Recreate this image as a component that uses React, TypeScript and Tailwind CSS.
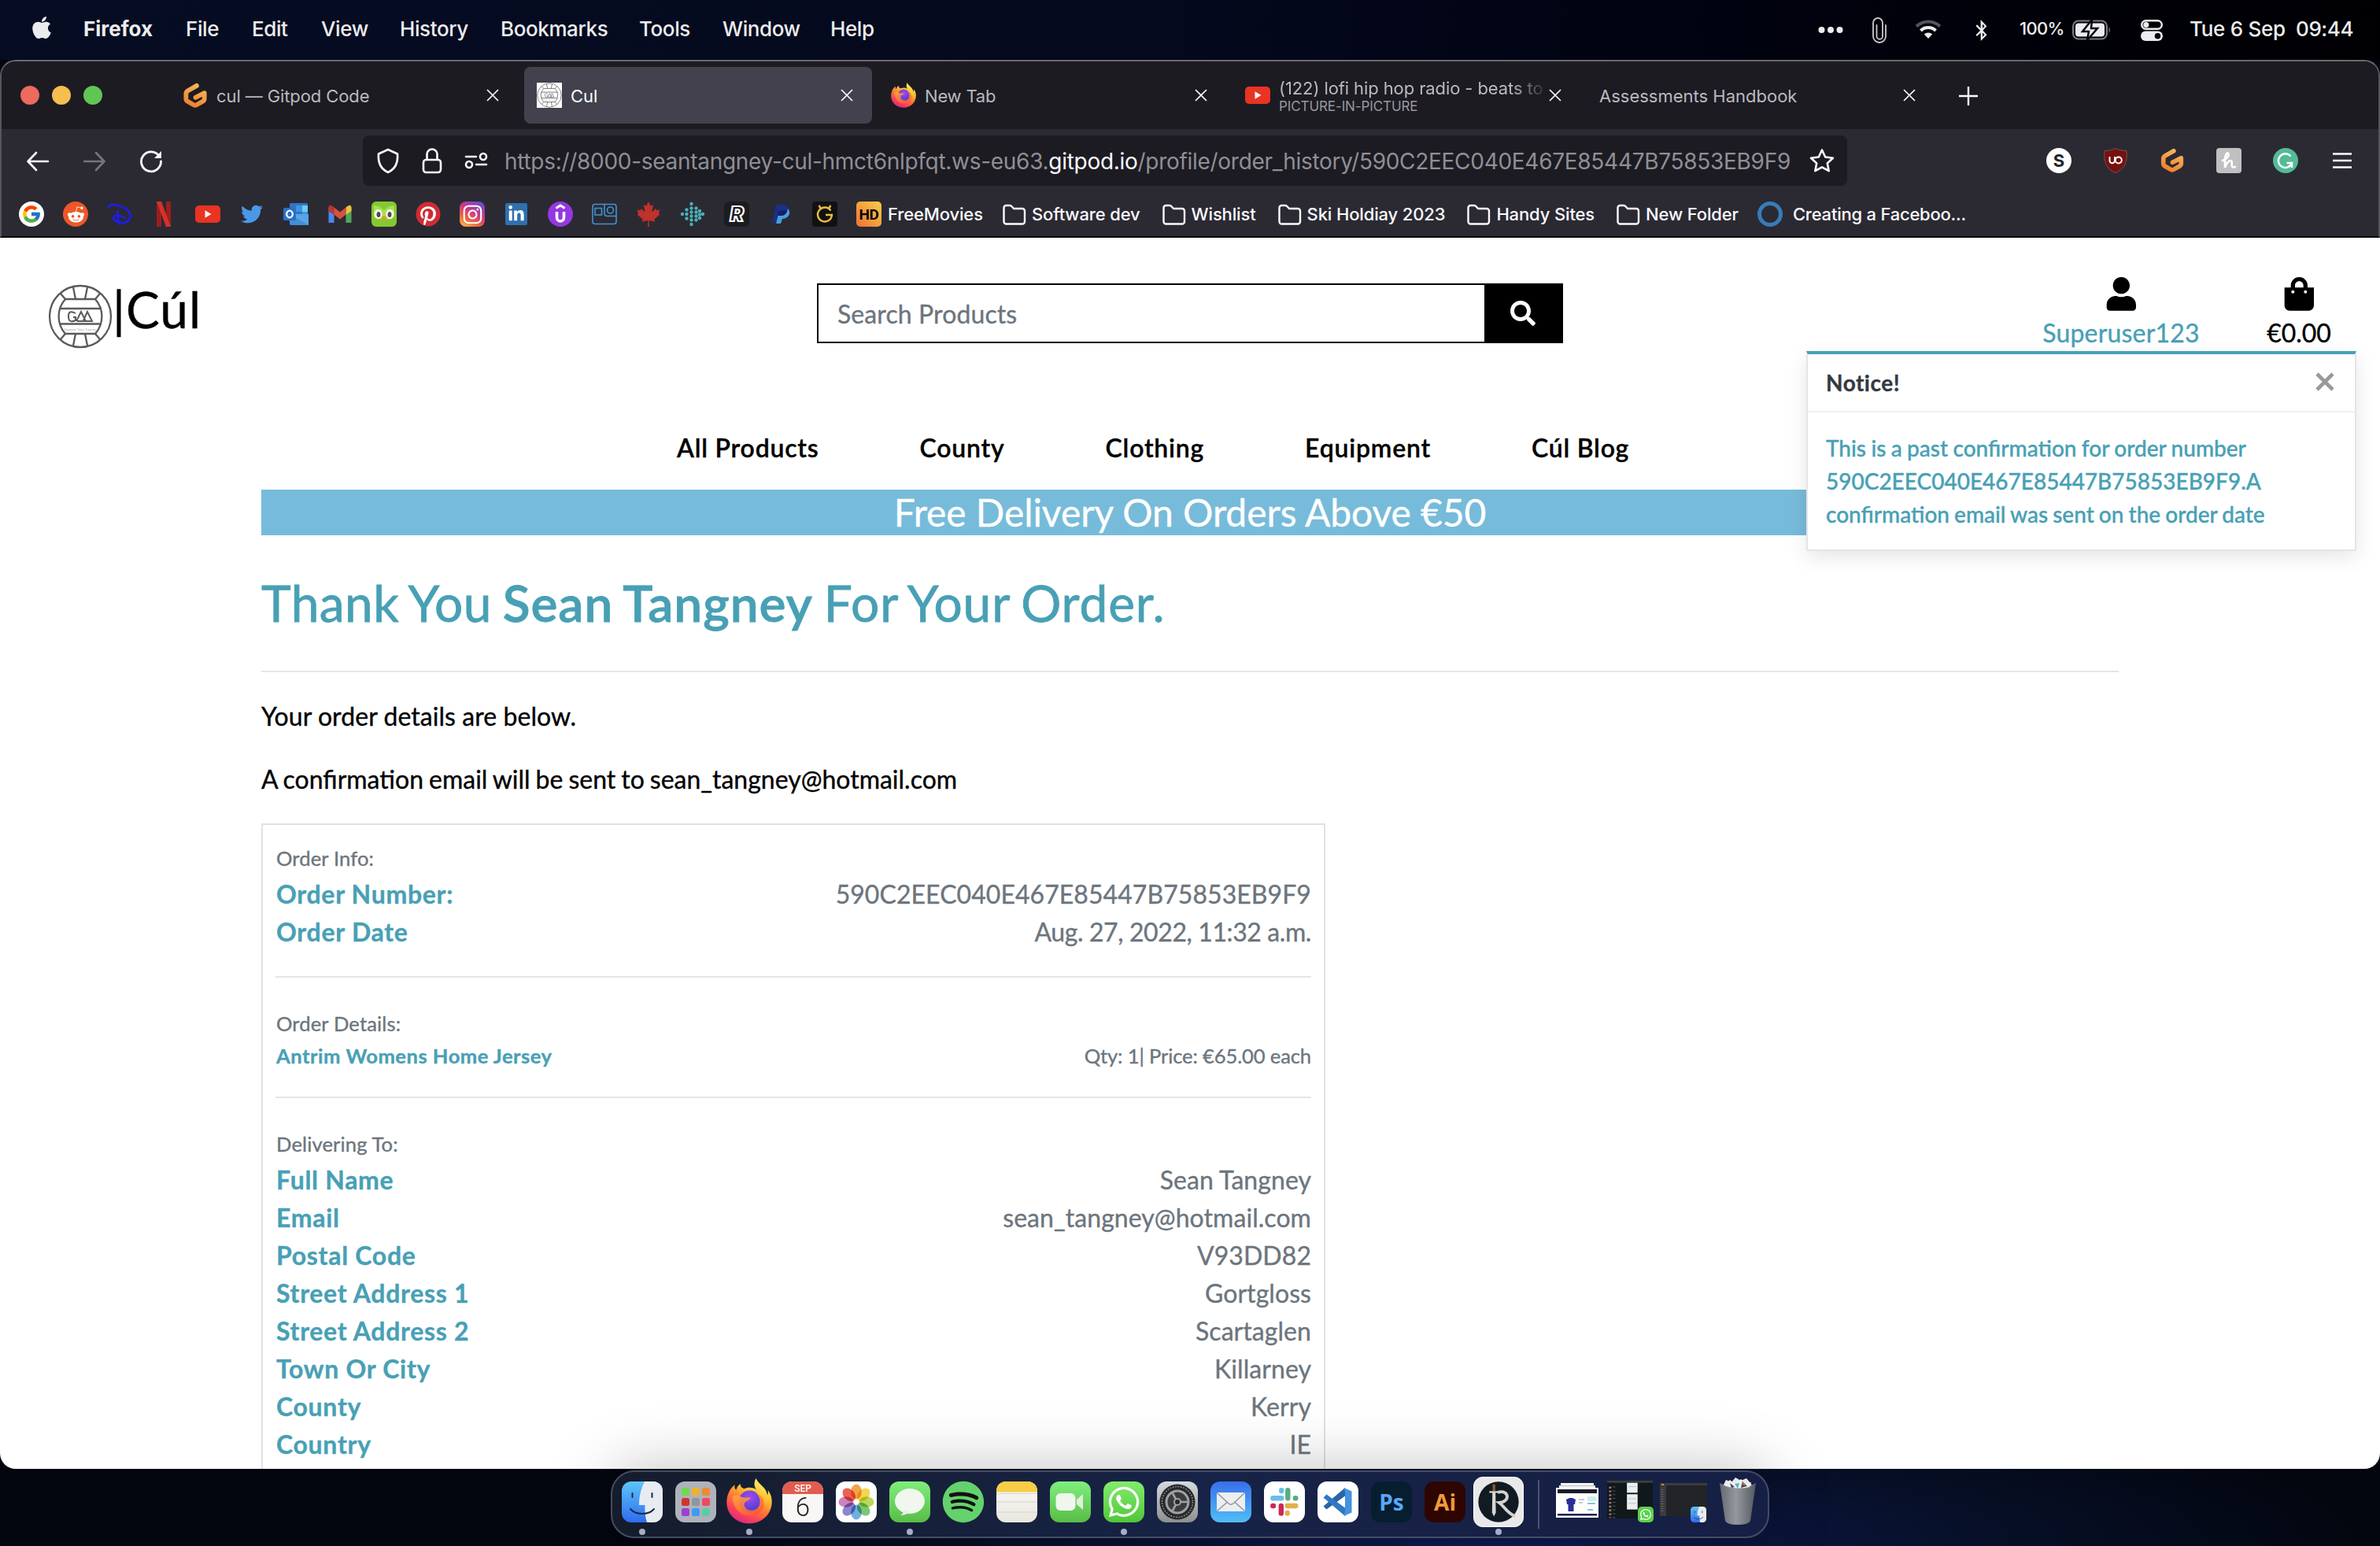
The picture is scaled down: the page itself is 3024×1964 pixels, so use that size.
import type { ReactNode } from "react";
import {
  FaApple,
  FaBluetoothB,
  FaCanadianMapleLeaf,
  FaInstagram,
  FaLinkedinIn,
  FaPinterest,
  FaRedditAlien,
  FaSearch,
  FaShoppingBag,
  FaSpotify,
  FaTwitter,
  FaUser,
  FaWhatsapp,
} from "react-icons/fa";
import { FcGoogle } from "react-icons/fc";

/* ---------- shared drawings ---------- */

function FirefoxLogo({ className }: { className: string }) {
  return (
    <svg viewBox="0 0 100 101" className={className}>
      <defs>
        <linearGradient id="ffBody" x1="0.8" y1="0.05" x2="0.3" y2="1">
          <stop offset="0" stopColor="#fff36b" />
          <stop offset="0.3" stopColor="#ffc232" />
          <stop offset="0.55" stopColor="#ff7a33" />
          <stop offset="0.8" stopColor="#f9405a" />
          <stop offset="1" stopColor="#d62a84" />
        </linearGradient>
        <linearGradient id="ffHead" x1="0" y1="0" x2="0.6" y2="1">
          <stop offset="0" stopColor="#ffb340" />
          <stop offset="1" stopColor="#fb5a3a" />
        </linearGradient>
        <radialGradient id="ffGlobe" cx="0.5" cy="0.3" r="0.7">
          <stop offset="0" stopColor="#a14bf0" />
          <stop offset="1" stopColor="#4a3bd0" />
        </radialGradient>
      </defs>
      <path
        fill="url(#ffBody)"
        d="M65 0C60 9 60 18 66 25C56 19 46 20 39 23C33 21 30 18 31 12C25 16 22 20 21 26C17 22 17 18 18 14C8 22 0 36 0 53C0 80 22 100 50 100C78 100 100 80 100 52C100 40 96 32 91 26C92 31 92 34 90 37C88 19 71 15 65 0Z"
      />
      <circle cx="51" cy="51" r="24" fill="url(#ffGlobe)" />
      <path
        fill="url(#ffHead)"
        d="M13 40C21 36 29 38 34 42C40 44 47 41 52 43C52 49 43 50 40 54C36 62 44 71 55 71C68 71 75 60 73 47C71 38 67 34 62 32C74 34 84 45 82 60C79 76 64 84 49 83C28 82 14 64 13 40Z"
        opacity="0.9"
      />
    </svg>
  );
}

function GitpodLogo({ className }: { className: string }) {
  return (
    <svg viewBox="0 0 32 34" className={className} fill="none">
      <defs>
        <linearGradient id="gp" x1="0.7" y1="0" x2="0.3" y2="1">
          <stop offset="0" stopColor="#f5b45a" />
          <stop offset="1" stopColor="#ee8330" />
        </linearGradient>
      </defs>
      <path
        d="M18 4L6.500 10.500Q4 12 4 14.500V21Q4 23.200 6 24.400L14.500 29.300Q16 30.100 17.500 29.300L26 24.400Q28 23.200 28 21V13.500L16.500 19.500"
        stroke="url(#gp)"
        strokeWidth="6"
        strokeLinecap="round"
        strokeLinejoin="round"
      />
    </svg>
  );
}

function GaaBall({ className, stroke = "#5a5a5a" }: { className: string; stroke?: string }) {
  return (
    <svg viewBox="-41 -41 82 82" className={className} fill="none" stroke={stroke} strokeWidth="2.300">
      <circle r="39" />
      <path d="M-19-22H19M-27-10H27M-27 9.500H27M-19 22H19" strokeWidth="2.500" />
      <path d="M-19-22A33 33 0 0 0-19 22M19-22A33 33 0 0 1 19 22" />
      <path d="M-25-29L-19-22M25-29L19-22M-25 29L-19 22M25 29L19 22M-9-37L-6-22M9-37L6-22M-9 37L-6 22M9 37L6 22" />
      <path d="M-6-4Q-15-9-15 0T-6 5V1H-9M-5 6L1-6L7 6H-4M4 5L9-6L15 6H6" strokeWidth="2" />
      <text x="0" y="17.500" fontSize="4.500" fontFamily="Lato, sans-serif" textAnchor="middle" fill="#aaa" stroke="none">
        Support Your County
      </text>
    </svg>
  );
}

function YoutubeBadge({ className }: { className: string }) {
  return (
    <svg viewBox="0 0 32 22" className={className}>
      <rect width="32" height="22" rx="5" fill="#e93323" />
      <path d="M12.500 6.300L20.500 11L12.500 15.700Z" fill="#fff" />
    </svg>
  );
}

function CloseGlyph() {
  return (
    <svg viewBox="0 0 16 16" className="size-4 shrink-0" stroke="#fbfbfe" strokeWidth="1.700">
      <path d="M1 1L15 15M15 1L1 15" />
    </svg>
  );
}

/* ---------- macOS menu bar ---------- */

function MenuBar() {
  return (
    <header className="flex h-[76px] shrink-0 items-center justify-between bg-gradient-to-r from-[#060c22] via-[#04091d] to-[#000003] pb-[3px] text-[26px] font-medium tracking-[-0.4px] text-[#ececee]">
      <div className="ml-[37px] grid grid-cols-[69px_130px_84px_88px_100px_128px_176px_106px_137px_80px] items-center">
        <FaApple className="-mt-1 size-8" />
        <span className="font-bold tracking-normal">Firefox</span>
        <span>File</span>
        <span>Edit</span>
        <span>View</span>
        <span>History</span>
        <span>Bookmarks</span>
        <span>Tools</span>
        <span>Window</span>
        <span>Help</span>
      </div>
      <div className="grid grid-cols-[68px_55px_75px_59px_66px_87px_62px_135px_107px] items-center whitespace-nowrap">
        <svg viewBox="0 0 32 10" className="mt-[3px] h-[10px] w-8" fill="currentColor">
          <circle cx="4.500" cy="5" r="4" />
          <circle cx="16" cy="5" r="4" />
          <circle cx="27.500" cy="5" r="4" />
        </svg>
        <svg viewBox="0 0 20 34" className="mt-[3px] h-[34px] w-5" fill="none" stroke="#c9c9cb" strokeWidth="1.800" strokeLinecap="round">
          <path d="M6.500 11V25A3.700 3.700 0 0 0 14 25V8A6 6 0 0 0 2 8V25A8 8 0 0 0 18 25V11" />
        </svg>
        <svg viewBox="0 0 34 26" className="h-[26px] w-[34px]" fill="none" stroke="currentColor" strokeWidth="4">
          <path d="M2 9.500A21.500 21.500 0 0 1 32 9.500" stroke="#55565c" />
          <path d="M7.500 15A13.500 13.500 0 0 1 26.500 15" />
          <path d="M17 25L11.800 19.600A7.500 7.500 0 0 1 22.200 19.600Z" fill="currentColor" stroke="none" />
        </svg>
        <FaBluetoothB className="mt-[3px] -ml-1 size-[27px]" />
        <span className="-ml-px text-[22px] tracking-[-0.7px]">100%</span>
        <svg viewBox="0 0 50 26" className="mt-[2px] h-[26px] w-[50px]">
          <rect x="1" y="1.500" width="43" height="23" rx="7" fill="none" stroke="#7b7c82" strokeWidth="2" />
          <path d="M46.500 9Q49.500 13 46.500 17Z" fill="#7b7c82" />
          <rect x="4" y="4.500" width="37" height="17" rx="4" fill="#ececee" />
          <path d="M25 0L13 15H21L19 26L32 11H24Z" fill="#ececee" stroke="#03050f" strokeWidth="2.500" />
        </svg>
        <svg viewBox="0 0 28 27" className="mt-[3px] h-[27px] w-7">
          <rect x="1.200" y="1.200" width="25.600" height="10.600" rx="5.300" fill="none" stroke="#ececee" strokeWidth="2.400" />
          <circle cx="6.800" cy="6.500" r="3.500" fill="#ececee" />
          <rect y="14.500" width="28" height="12.500" rx="6.250" fill="#ececee" />
          <circle cx="21.500" cy="20.750" r="3.800" fill="#03050f" />
        </svg>
        <span className="tracking-[-0.3px]">Tue 6 Sep</span>
        <span>09:44</span>
      </div>
    </header>
  );
}

/* ---------- Firefox chrome ---------- */

function Tab({ children, active = false }: { children: ReactNode; active?: boolean }) {
  return (
    <div
      className={
        active
          ? "flex h-[72px] w-[442px] items-center rounded-lg bg-[#42414d] pr-6 pl-4 text-[#fbfbfe]"
          : "flex h-[72px] w-[442px] items-center pr-6 pl-4 text-[#b9b9be]"
      }
    >
      {children}
    </div>
  );
}

function TabStrip() {
  return (
    <div className="flex h-[86px] items-center bg-[#1c1b22] pl-6 text-[22px]">
      <div className="flex w-[190px] gap-4">
        <span className="size-6 rounded-full bg-[#ed6a5e]" />
        <span className="size-6 rounded-full bg-[#f4bf4f]" />
        <span className="size-6 rounded-full bg-[#61c554]" />
      </div>
      <div className="flex gap-2">
        <Tab>
          <GitpodLogo className="h-[33px] w-8" />
          <span className="mt-[2px] ml-[11px] flex-1 tracking-[-0.1px]">cul — Gitpod Code</span>
          <CloseGlyph />
        </Tab>
        <Tab active>
          <span className="grid size-8 place-items-center bg-white">
            <GaaBall className="size-8" stroke="#777" />
          </span>
          <span className="mt-[2px] ml-[11px] flex-1">Cul</span>
          <CloseGlyph />
        </Tab>
        <Tab>
          <FirefoxLogo className="size-8" />
          <span className="mt-[2px] ml-[11px] flex-1 tracking-[-0.2px]">New Tab</span>
          <CloseGlyph />
        </Tab>
        <Tab>
          <YoutubeBadge className="h-[22px] w-8" />
          <div className="ml-[11px] h-[54px] w-[343px] pt-[5px] tracking-[-0.1px] whitespace-nowrap">
            <div className="overflow-hidden leading-[26px] [mask-image:linear-gradient(to_right,black_86%,transparent_100%)]">
              (122) lofi hip hop radio - beats to
            </div>
            <div className="text-[17px] leading-[21px] text-[#98989d]">PICTURE-IN-PICTURE</div>
          </div>
          <CloseGlyph />
        </Tab>
        <Tab>
          <span className="mt-[2px] flex-1">Assessments Handbook</span>
          <CloseGlyph />
        </Tab>
      </div>
      <svg viewBox="0 0 24 24" className="mt-[2px] ml-[31px] size-6" stroke="#fbfbfe" strokeWidth="2.400">
        <path d="M12 0V24M0 12H24" />
      </svg>
    </div>
  );
}

function AddressRow() {
  return (
    <div className="flex h-20 items-center pl-[31px]">
      <div className="mt-[2px] flex w-[428px] items-center gap-[42px]">
        <svg viewBox="0 0 30 26" className="h-[26px] w-[30px]" fill="none" stroke="#fbfbfe" strokeWidth="2.600" strokeLinecap="round" strokeLinejoin="round">
          <path d="M28 13H3M13 2L2.500 13L13 24" />
        </svg>
        <svg viewBox="0 0 30 26" className="h-[26px] w-[30px]" fill="none" stroke="#75757c" strokeWidth="2.600" strokeLinecap="round" strokeLinejoin="round">
          <path d="M2 13H27M17 2L27.500 13L17 24" />
        </svg>
        <svg viewBox="0 0 30 30" className="size-[30px]" fill="none" stroke="#fbfbfe" strokeWidth="2.800" strokeLinecap="round">
          <path d="M25.500 8.500A12.500 12.500 0 1 0 27.500 15" />
          <path d="M28 2V11H19Z" fill="#fbfbfe" stroke="none" />
        </svg>
      </div>
      <div className="flex h-16 w-[1886px] items-center rounded-lg bg-[#1c1b22] pl-[17px]">
        <svg viewBox="0 0 30 33" className="h-[33px] w-[30px]" fill="none" stroke="#fbfbfe" strokeWidth="2.600" strokeLinejoin="round">
          <path d="M15 2L27 7.500C28 19 23.500 27 15 31C6.500 27 2 19 3 7.500Z" />
        </svg>
        <svg viewBox="0 0 26 33" className="ml-[28px] h-[33px] w-[26px]" fill="none" stroke="#fbfbfe" strokeWidth="2.600">
          <rect x="2" y="15" width="22" height="16" rx="3.500" />
          <path d="M6.500 15V8A6.500 6.500 0 0 1 19.500 8V15" />
        </svg>
        <svg viewBox="0 0 30 22" className="ml-[28px] h-[22px] w-[30px]" fill="none" stroke="#fbfbfe" strokeWidth="2.600" strokeLinecap="round">
          <path d="M2 6H15M15 16H28" />
          <circle cx="24" cy="6" r="4" />
          <circle cx="6" cy="16" r="4" />
        </svg>
        <div className="mt-[2px] ml-[21px] w-[1658px] text-[28px] tracking-[-0.29px] whitespace-nowrap text-[#8f8f96]">
          https://8000-seantangney-cul-hmct6nlpfqt.ws-eu63.<span className="text-[#fbfbfe]">gitpod.io</span>
          /profile/order_history/590C2EEC040E467E85447B75853EB9F9
        </div>
        <svg viewBox="0 0 32 32" className="size-8" fill="none" stroke="#fbfbfe" strokeWidth="2.600" strokeLinejoin="round">
          <path d="M16 2.500L20.200 11.500L30 12.700L22.800 19.400L24.700 29.200L16 24.300L7.300 29.200L9.200 19.400L2 12.700L11.800 11.500Z" />
        </svg>
      </div>
      <div className="ml-[253px] flex items-center gap-10">
        <span className="grid size-8 place-items-center rounded-full bg-white text-[22px] leading-none font-bold text-[#23222b]">S</span>
        <svg viewBox="0 0 32 32" className="size-8">
          <path d="M16 0.500C20 3 26 3.500 30 3.500C31 16 29 26 16 31.500C3 26 1 16 2 3.500C6 3.500 12 3 16 0.500Z" fill="#75110f" stroke="#8c5a5a" strokeWidth="0.800" />
          <path d="M8.500 11V16A3.200 3.200 0 0 0 15 16V11" fill="none" stroke="#fff" strokeWidth="2" />
          <circle cx="19.800" cy="15.500" r="4" fill="none" stroke="#fff" strokeWidth="2" />
        </svg>
        <GitpodLogo className="size-8" />
        <span className="grid size-8 place-items-center rounded-[4px] bg-[#c0c0c1]">
          <svg viewBox="0 0 20 24" className="h-6 w-5" fill="none" stroke="#fff" strokeWidth="2.600" strokeLinecap="round">
            <path d="M2 12C8 10 11 5 9 2.500C7 1 5 6 5 12V21C7 14 12 10 13.500 13C14.500 16 11.500 22 18 20" />
          </svg>
        </span>
        <svg viewBox="0 0 32 32" className="size-8">
          <circle cx="16" cy="16" r="16" fill="#54bb97" />
          <path d="M22.500 10.500A8.800 8.800 0 1 0 24 19H17.500M24 19V25" fill="none" stroke="#fff" strokeWidth="2.400" />
        </svg>
        <svg viewBox="0 0 24 20" className="ml-1 h-5 w-6" stroke="#fbfbfe" strokeWidth="2.400">
          <path d="M0 1.500H24M0 10H24M0 18.500H24" />
        </svg>
      </div>
    </div>
  );
}

function Folder({ label }: { label: string }) {
  return (
    <div className="flex items-center gap-[7px]">
      <svg viewBox="0 0 30 28" className="h-7 w-[31px]" fill="none" stroke="#fbfbfe" strokeWidth="2.400" strokeLinejoin="round">
        <path d="M2 5A3 3 0 0 1 5 2H9.500Q11 2 12 3.200L14.500 6H25.500A3 3 0 0 1 28.500 9V22.500A3 3 0 0 1 25.500 25.500H5A3 3 0 0 1 2 22.500Z" />
      </svg>
      <span>{label}</span>
    </div>
  );
}

function Cell({ children }: { children: ReactNode }) {
  return <span className="grid size-8 shrink-0 place-items-center">{children}</span>;
}

const fitbitColumns = [
  { x: 3, ys: [16] },
  { x: 8.5, ys: [10.5, 16, 21.5] },
  { x: 14.5, ys: [3, 8.5, 13.5, 18.5, 23.5, 29] },
  { x: 20.5, ys: [8.5, 13.5, 18.5, 23.5] },
  { x: 25, ys: [12, 16.5, 21] },
  { x: 29, ys: [16] },
];

function BookmarksBar() {
  return (
    <div className="flex h-14 items-center pl-[22px] text-[22px] font-medium tracking-[-0.14px] whitespace-nowrap text-[#fbfbfe]">
      <div className="flex gap-6">
        <span className="grid size-8 place-items-center rounded-full bg-white">
          <FcGoogle className="size-[26px]" />
        </span>
        <span className="grid size-8 place-items-center rounded-full bg-[#ee5728]">
          <FaRedditAlien className="size-[23px] text-white" />
        </span>
        <svg viewBox="0 0 32 32" className="size-8" fill="none" stroke="#1d1df0" strokeWidth="2.600" strokeLinecap="round">
          <path d="M2 7C3 2 18 4 26 11C33 18 29 28 18 27C9 26 5 20 10 18C15 17 20 19 23 21" />
          <path d="M14 12C12 19 14 25 16 29" />
        </svg>
        <svg viewBox="0 0 32 32" className="size-8">
          <path d="M7 0H13V32H7ZM19 0H25V32H19Z" fill="#9c1f1c" />
          <path d="M7 0H13L25 32H19Z" fill="#d6322a" />
        </svg>
        <Cell>
          <YoutubeBadge className="h-[22px] w-8" />
        </Cell>
        <Cell>
          <FaTwitter className="size-7 text-[#4a99e9]" />
        </Cell>
        <svg viewBox="0 0 32 32" className="size-8">
          <rect x="8" y="2" width="23" height="26" rx="1.500" fill="#2e74c9" />
          <path d="M16 5H24V13H16Z" fill="#4292dd" />
          <path d="M24 5H31V13H24Z" fill="#6bcdf5" />
          <path d="M24 13H31V20H24Z" fill="#3f96e4" />
          <path d="M8 16H32V30H10Z" fill="#57a5e6" />
          <path d="M8 16L32 30H10Q8 30 8 28Z" fill="#418fd9" />
          <rect x="0" y="8" width="16" height="16" rx="1.500" fill="#2b6fc6" />
          <ellipse cx="8" cy="16" rx="3.800" ry="4.400" fill="none" stroke="#fff" strokeWidth="2.300" />
        </svg>
        <svg viewBox="0 0 32 32" className="size-8">
          <path d="M1.500 7V27H8.500V13Z" fill="#4b87ee" />
          <path d="M30.500 7V27H23.500V13Z" fill="#50a757" />
          <path d="M23.500 7.500Q30 2 30.500 8V12L23.500 17Z" fill="#f1be42" />
          <path d="M1.500 12V8Q2 2 8.500 7.500V17Z" fill="#b9372d" />
          <path d="M8.500 7.500L16 13.500L23.500 7.500V16.500L16 22.500L8.500 16.500Z" fill="#d85140" />
        </svg>
        <svg viewBox="0 0 32 32" className="size-8">
          <rect width="32" height="32" rx="6" fill="#85c832" />
          <path d="M3 5Q10 5 16 11Q22 5 29 5V19Q22 26 16 20Q10 26 3 19Z" fill="#a8e04f" />
          <ellipse cx="8.500" cy="16" rx="5" ry="6" fill="#fff" />
          <ellipse cx="23.500" cy="16" rx="5" ry="6" fill="#fff" />
          <ellipse cx="9" cy="16.500" rx="2.500" ry="3.600" fill="#4b4b4b" />
          <ellipse cx="23" cy="16.500" rx="2.500" ry="3.600" fill="#4b4b4b" />
          <path d="M12.500 20L16 18L19.500 20L16 25Z" fill="#ef9436" />
        </svg>
        <Cell>
          <span className="size-[30px] rounded-full bg-white">
            <FaPinterest className="-m-px size-8 text-[#cf2c33]" />
          </span>
        </Cell>
        <span className="grid size-8 place-items-center rounded-[8px] bg-[linear-gradient(30deg,#fbc85a_0%,#f0653b_30%,#c8378d_60%,#5b55d6_95%)]">
          <FaInstagram className="size-[27px] text-white" />
        </span>
        <Cell>
          <span className="grid size-7 place-items-center rounded-[2px] bg-[#2f70ae]">
            <FaLinkedinIn className="size-[22px] text-white" />
          </span>
        </Cell>
        <svg viewBox="0 0 32 32" className="size-8" fill="none" stroke="#fff" strokeWidth="3.600">
          <circle cx="16" cy="16" r="16" fill="#9538e2" stroke="none" />
          <path d="M10.500 8.500L16 5L21.500 8.500" strokeWidth="3" />
          <path d="M11.500 13V20A4.500 5 0 0 0 20.500 20V13" />
        </svg>
        <svg viewBox="0 0 32 32" className="size-8" fill="none" stroke="#4392ce" strokeWidth="1.600">
          <rect x="1" y="3.500" width="30" height="25" rx="3" />
          <path d="M16 4V15Q16 18.500 19 18.500H31" />
          <rect x="4" y="8.500" width="8.500" height="8.500" />
          <circle cx="23.500" cy="11" r="4" />
        </svg>
        <Cell>
          <FaCanadianMapleLeaf className="size-8 text-[#c0322b]" />
        </Cell>
        <svg viewBox="0 0 32 32" className="size-8" fill="#4cb0b8">
          {fitbitColumns.map((c) => c.ys.map((y) => <circle key={`${c.x}-${y}`} cx={c.x} cy={y} r="2.200" />))}
        </svg>
        <span className="grid size-8 place-items-center rounded-[6px] bg-[#1b1c1f] text-[26px] leading-none font-black text-[#1b1c1f] italic [-webkit-text-stroke:2.2px_#ffffff]">
          R
        </span>
        <Cell>
          <svg viewBox="0 0 32 32" className="size-8">
            <path d="M10 4H20Q27 5 25 12Q23 19 15 19H12L10 27H5Z" fill="#1a2f86" />
            <path d="M25 9Q29 13 26 18Q23 22 18 22L16 28H10L12.500 18H16Q24 18 25 9Z" fill="#4a9ddf" />
            <path d="M13 13L12 18H16Q22 18 24 12Q20 10 13 13Z" fill="#14206a" />
          </svg>
        </Cell>
        <svg viewBox="0 0 32 32" className="size-8" fill="none" stroke="#f0bd42" strokeWidth="2.400">
          <rect width="32" height="32" rx="4" fill="#111" stroke="none" />
          <path d="M23.500 11.500A9 9 0 1 0 25 17H17M8.500 5L11 9M23.500 5L21 9" />
        </svg>
        <span className="grid size-8 place-items-center rounded-[5px] bg-gradient-to-tr from-[#ec6f36] to-[#f7ce46] font-[Roboto] text-[19px] leading-none font-bold tracking-[-0.5px] text-black">
          HD
        </span>
      </div>
      <span className="mt-px ml-[8px] w-[145px]">FreeMovies</span>
      <div className="mt-px flex gap-[27px]">
        <Folder label="Software dev" />
        <Folder label="Wishlist" />
        <Folder label="Ski Holdiay 2023" />
        <Folder label="Handy Sites" />
        <Folder label="New Folder" />
      </div>
      <span className="mr-[13px] ml-6 size-8 rounded-full border-[5px] border-[#377cb8]" />
      <span className="mt-px tracking-[-0.23px]">Creating a Faceboo...</span>
    </div>
  );
}

/* ---------- shop page ---------- */

function SiteHeader() {
  return (
    <div className="flex h-[243px] items-start pl-[61px]">
      <a className="mt-[53px] flex w-[977px]">
        <GaaBall className="mt-[6px] size-[82px]" />
        <span className="text-[64px] leading-[76.8px] tracking-[1px] text-black">|Cúl</span>
      </a>
      <div className="mt-[58px] flex h-[76px] w-[948px] border-2 border-black">
        <div className="flex-1 pl-6 text-[32px] leading-[74px] tracking-[0.1px] text-[#6c757d]">Search Products</div>
        <button className="grid w-[98px] place-items-center bg-black">
          <FaSearch className="size-8 text-white" />
        </button>
      </div>
      <div className="mt-[50px] ml-[609px] flex w-[200px] flex-col items-center">
        <FaUser className="size-[42.67px] text-black" />
        <span className="mt-1 text-[32px] leading-[48px] tracking-[0.2px] text-[#48a0b5]">Superuser123</span>
      </div>
      <div className="mt-[50px] ml-[84px] flex w-[84px] flex-col items-center">
        <FaShoppingBag className="size-[42.67px] text-black" />
        <span className="mt-1 text-[32px] leading-[48px] tracking-[-0.1px] text-black">€0.00</span>
      </div>
    </div>
  );
}

function Toast() {
  return (
    <div className="absolute top-[144px] left-[2295px] w-[699px] border-2 border-t-4 border-[#e4e4e4] border-t-[#48a0b5] bg-white text-[28px] leading-[42px] shadow-[0_8px_24px_rgba(0,0,0,0.1)]">
      <div className="flex h-[74px] items-center justify-between border-b-2 border-[#f0f0f0] pr-[26px] pl-[23px]">
        <strong className="tracking-[0.5px] text-[#343a40]">Notice!</strong>
        <svg viewBox="0 0 24 24" className="mb-[2px] size-6" stroke="#999" strokeWidth="4.600">
          <path d="M2 2L22 22M22 2L2 22" />
        </svg>
      </div>
      <div className="py-6 pl-[23px] font-medium whitespace-nowrap text-[#48a0b5]">
        <div className="[word-spacing:-0.7px]">This is a past confirmation for order number</div>
        <div>590C2EEC040E467E85447B75853EB9F9.A</div>
        <div className="[word-spacing:-1px]">confirmation email was sent on the order date</div>
      </div>
    </div>
  );
}

function Row({ label, value }: { label: string; value: string }) {
  return (
    <div className="flex justify-between text-[32px] leading-[48px]">
      <strong className="pl-px tracking-[0.7px] text-[#48a0b5]">{label}</strong>
      <span className="tracking-[0.06px] text-[#6c757d]">{value}</span>
    </div>
  );
}

function Caption({ children }: { children: string }) {
  return (
    <div className="h-12 text-[32px] leading-[48px] text-[#6c757d]">
      <span className="pl-px text-[25.6px] tracking-[0.12px]">{children}</span>
    </div>
  );
}

const delivery: [string, string][] = [
  ["Full Name", "Sean Tangney"],
  ["Email", "sean_tangney@hotmail.com"],
  ["Postal Code", "V93DD82"],
  ["Street Address 1", "Gortgloss"],
  ["Street Address 2", "Scartaglen"],
  ["Town Or City", "Killarney"],
  ["County", "Kerry"],
  ["Country", "IE"],
];

function ShopPage() {
  return (
    <main className="relative flex-1 overflow-hidden rounded-b-[20px] bg-white font-[Lato,sans-serif] [-webkit-text-stroke:0.35px_currentColor]">
      <SiteHeader />
      <nav className="flex h-12 gap-[128px] pl-[860px] text-[32px] leading-[48px] font-semibold tracking-[0.78px] text-black">
        <a>All Products</a>
        <a>County</a>
        <a>Clothing</a>
        <a>Equipment</a>
        <a>Cúl Blog</a>
      </nav>
      <div className="ml-[332px] w-[2360px]">
        <div className="mt-[29px] h-[58px] bg-[#77bbda] text-center text-[48px] leading-[57.6px] tracking-[-0.08px] text-white">
          Free Delivery On Orders Above €50
        </div>
        <h2 className="mt-12 text-[64px] leading-[76.8px] tracking-[0.45px] text-[#48a0b5] [-webkit-text-stroke:0.8px_currentColor] [word-spacing:-3px]">
          Thank You <span className="font-semibold tracking-[0.95px]">Sean Tangney</span>{" "}
          <span className="tracking-[0.85px]">For Your Order.</span>
        </h2>
        <hr className="mt-[47.6px] mb-8 border-t-2 border-[#e5e5e5]" />
        <p className="mb-8 text-[32px] leading-[48px] tracking-[0.06px] text-black">Your order details are below.</p>
        <p className="mb-8 text-[32px] leading-[48px] text-black [word-spacing:-1.2px]">
          A confirmation email will be sent to sean_tangney@hotmail.com
        </p>
        <section className="w-[1352px] border-2 border-[#dee2e6] p-4 [&>hr]:my-8 [&>hr]:border-t-2 [&>hr]:border-[#e5e5e5]">
          <Caption>Order Info:</Caption>
          <Row label="Order Number:" value="590C2EEC040E467E85447B75853EB9F9" />
          <div className="flex justify-between text-[32px] leading-[48px]">
            <strong className="pl-px tracking-[0.75px] text-[#48a0b5]">Order Date</strong>
            <span className="tracking-[-0.4px] text-[#6c757d]">Aug. 27, 2022, 11:32 a.m.</span>
          </div>
          <hr />
          <Caption>Order Details:</Caption>
          <div className="flex justify-between text-[25.6px] leading-[38.4px]">
            <strong className="pl-px tracking-[0.48px] text-[#48a0b5]">Antrim Womens Home Jersey</strong>
            <span className="tracking-[-0.15px] text-[#6c757d]">Qty: 1| Price: €65.00 each</span>
          </div>
          <hr />
          <Caption>Delivering To:</Caption>
          {delivery.map(([label, value]) => (
            <Row key={label} label={label} value={value} />
          ))}
        </section>
      </div>
      <Toast />
    </main>
  );
}

/* ---------- Dock ---------- */

function Finder({ className }: { className: string }) {
  return (
    <svg viewBox="0 0 52 52" className={className}>
      <defs>
        <linearGradient id="fdL" x1="0" y1="0" x2="0" y2="1">
          <stop offset="0" stopColor="#5cc6f8" />
          <stop offset="1" stopColor="#2f6cf0" />
        </linearGradient>
        <clipPath id="fdC">
          <rect width="52" height="52" rx="12" />
        </clipPath>
      </defs>
      <g clipPath="url(#fdC)">
        <rect width="52" height="52" fill="url(#fdL)" />
        <path d="M29 0C24 10 22 20 22 30H29.500C29 38 30 46 32 52H52V0Z" fill="#e9ebf2" />
      </g>
      <path d="M13.500 15V20M38.500 15V20" stroke="#1b2a4a" strokeWidth="2" strokeLinecap="round" />
      <path d="M11 35C18 43 34 43 41 35" fill="none" stroke="#1b2a4a" strokeWidth="2" strokeLinecap="round" />
    </svg>
  );
}

function DockItem({ children, running = false, large = false }: { children: ReactNode; running?: boolean; large?: boolean }) {
  return (
    <div className="relative flex h-[52px] w-[52px] items-center justify-center">
      <div className={large ? "grid h-16 w-16 shrink-0 place-items-center" : "grid size-[52px] shrink-0 place-items-center"}>{children}</div>
      {running && <span className="absolute top-[60px] left-[22px] size-2 rounded-full bg-[#a9adc4]" />}
    </div>
  );
}

const petals = [
  ["#f19a37", "rotate(0)"],
  ["#f2d33d", "rotate(45)"],
  ["#b6d24c", "rotate(90)"],
  ["#6fbf6b", "rotate(135)"],
  ["#5fa8e0", "rotate(180)"],
  ["#8179c6", "rotate(225)"],
  ["#c774b4", "rotate(270)"],
  ["#e9503f", "rotate(315)"],
];

const launchpad = [
  "bg-[#70d94c]", "bg-[#efb133]", "bg-[#ec8a32]",
  "bg-[#cf3530]", "bg-[#8f969c]", "bg-[#ee4a62]",
  "bg-[#9a41d3]", "bg-[#3b9bf5]", "bg-[#5bcca2]",
];

function Dock() {
  return (
    <div className="relative z-10 mt-[2px] flex h-[86px] w-[1472px] self-center rounded-[30px] border-2 border-[#444c66] bg-gradient-to-r from-[#151c2c] via-[#172346] to-[#161f45] pt-3 pl-3 shadow-[0_0_80px_rgba(0,0,0,0.26)]">
      <div className="flex gap-4">
        <DockItem running>
          <Finder className="size-[52px]" />
        </DockItem>
        <DockItem>
          <div className="grid size-[52px] grid-cols-3 place-content-center gap-[3px] rounded-xl bg-[#afb2ba] px-[8px]">
            {launchpad.map((c) => (
              <span key={c} className={`size-[10px] rounded-[2.500px] ${c}`} />
            ))}
          </div>
        </DockItem>
        <DockItem running large>
          <FirefoxLogo className="mb-[3px] size-[58px]" />
        </DockItem>
        <DockItem>
          <div className="flex size-[52px] flex-col items-center overflow-hidden rounded-xl bg-[#f8f7f5]">
            <span className="h-4 w-full bg-[#e25c50] text-center font-[Roboto] text-[12px] leading-[18px] font-medium text-white">SEP</span>
            <span className="font-[Roboto] text-[33px] leading-[33px] font-light text-[#222]">6</span>
          </div>
        </DockItem>
        <DockItem>
          <svg viewBox="-26 -26 52 52" className="size-[52px] rounded-xl bg-white">
            {petals.map(([c, t]) => (
              <ellipse key={t} cx="0" cy="-13" rx="6.800" ry="9.600" fill={c} opacity="0.9" transform={t} className="mix-blend-multiply" />
            ))}
          </svg>
        </DockItem>
        <DockItem running>
          <svg viewBox="0 0 52 52" className="size-[52px] rounded-xl bg-gradient-to-b from-[#80ee7c] to-[#57bd46]">
            <ellipse cx="26" cy="25" rx="19" ry="16" fill="#f1f7ef" />
            <path d="M18 36Q18 41 14 43Q21 43 25 39Z" fill="#e6f0e4" />
          </svg>
        </DockItem>
        <DockItem large>
          <span className="grid size-[52px] place-items-center rounded-full bg-[#111]">
            <FaSpotify className="-m-px size-[54px] text-[#64d26c]" />
          </span>
        </DockItem>
        <DockItem>
          <svg viewBox="0 0 52 52" className="size-[52px] rounded-xl bg-gradient-to-b from-[#fbfaf8] to-[#e9e6df]">
            <rect width="52" height="13.500" fill="#f7cd45" />
            <path d="M0 15.500H52" stroke="#b9b6ae" strokeWidth="1.200" strokeDasharray="1.200 1.200" />
            <path d="M0 26H52M0 39H52" stroke="#d6d3cc" strokeWidth="1.200" />
          </svg>
        </DockItem>
        <DockItem>
          <svg viewBox="0 0 52 52" className="size-[52px] rounded-xl bg-gradient-to-b from-[#80ee7c] to-[#57bd46]">
            <rect x="7.500" y="15" width="25" height="22" rx="6" fill="#f0f6ee" />
            <path d="M34 23L42 16V36L34 29Z" fill="#e2eee0" />
          </svg>
        </DockItem>
        <DockItem running>
          <span className="grid size-[52px] place-items-center rounded-xl bg-gradient-to-b from-[#83ec6c] to-[#4fc737]">
            <FaWhatsapp className="size-[44px] text-white" />
          </span>
        </DockItem>
        <DockItem>
          <svg viewBox="0 0 52 52" className="size-[52px] rounded-xl bg-gradient-to-b from-[#d3dbe0] to-[#8f8f8d]">
            <circle cx="26" cy="26" r="22.500" fill="#26292b" />
            <circle cx="26" cy="26" r="19.500" fill="none" stroke="#8a8c8e" strokeWidth="1.600" strokeDasharray="1.800 1.600" />
            <circle cx="26" cy="26" r="14" fill="#3a3d40" stroke="#9fa1a3" strokeWidth="3" />
            <path d="M26 26H40M26 26L19 13.500M26 26L19 38.500" stroke="#9fa1a3" strokeWidth="2.600" />
            <circle cx="26" cy="26" r="4" fill="#26292b" stroke="#9fa1a3" strokeWidth="2" />
          </svg>
        </DockItem>
        <DockItem>
          <svg viewBox="0 0 52 52" className="size-[52px] rounded-xl bg-gradient-to-b from-[#3a6ee9] to-[#53bdf6]">
            <rect x="8" y="14" width="36" height="24" rx="2.500" fill="#eceef0" />
            <path d="M9 15L23 28Q26 30.500 29 28L43 15M9 37L21 26.500M43 37L31 26.500" fill="none" stroke="#8c9096" strokeWidth="1.300" />
          </svg>
        </DockItem>
        <DockItem>
          <svg viewBox="0 0 52 52" className="size-[52px] rounded-xl bg-white" strokeWidth="6.400" strokeLinecap="round">
            <path d="M22.300 21.300H11.300M22.300 11.300V12" stroke="#65bfe8" />
            <path d="M30.300 21.300V11.300M40.300 21.300H39.800" stroke="#55ae82" />
            <path d="M29.800 31H40.300M29.800 40.500V40" stroke="#e2b04b" />
            <path d="M21.800 31V40.500M11.300 31H12" stroke="#cc2958" />
          </svg>
        </DockItem>
        <DockItem>
          <svg viewBox="0 0 52 52" className="size-[52px] rounded-xl bg-white">
            <path d="M7.500 31.500L35 8V18.500L11.500 35.500Z" fill="#2a64a4" />
            <path d="M7.500 20.500L35 44V33.500L11.500 16.500Z" fill="#2f78c6" />
            <path d="M33.500 8L43.500 12.500V39.500L33.500 44L35 38V14Z" fill="#4293df" />
          </svg>
        </DockItem>
        <DockItem>
          <span className="grid size-[52px] place-items-center rounded-xl bg-[#071d30] font-[Open_Sans] text-[28px] leading-none font-bold text-[#58a8f7]">Ps</span>
        </DockItem>
        <DockItem>
          <span className="grid size-[52px] place-items-center rounded-xl bg-[#2f0502] font-[Open_Sans] text-[28px] leading-none font-bold text-[#f09c38]">Ai</span>
        </DockItem>
        <DockItem running large>
          <svg viewBox="0 0 64 64" className="size-16 rounded-xl border border-white bg-[#e9e9e9]">
            <circle cx="32" cy="32" r="26.500" fill="#131b22" />
            <path d="M24 18H28L28.500 46L26 51L23.500 46Z" fill="#d7d7d3" />
            <path d="M20 19H34" stroke="#d7d7d3" strokeWidth="2.500" />
            <path d="M26 9V18" stroke="#8a5a36" strokeWidth="3.500" />
            <path d="M31 19.500C46 15 48 32 33 33C40 38 42 46 54 51" fill="none" stroke="#d3d3d0" strokeWidth="4" />
          </svg>
        </DockItem>
      </div>
      <span className="mt-[-2px] ml-[24px] h-[62px] w-[2px] bg-[#4b5478]" />
      <div className="-mt-[2px] ml-[21px] flex items-start">
        <svg viewBox="0 0 54 44" className="mt-1 h-11 w-[54px]">
          <path d="M6 0H48V3H50V6H4V3H6Z" fill="#f4f4f4" />
          <path d="M5 3.500H49" stroke="#9aa" strokeWidth="0.700" />
          <rect y="6" width="54" height="38" fill="#fff" />
          <rect x="2" y="8" width="50" height="5" fill="#1b1b2a" />
          <path d="M13 21L17 19H21L25 21L24 27H22.500V36H15.500V27H14Z" fill="#2a2f96" />
          <path d="M29 21H36M29 25H34" stroke="#999" strokeWidth="1" />
          <rect x="40" y="17" width="11" height="6" fill="#cfeee6" />
          <path d="M40 26H50M40 34H47" stroke="#58b6c2" strokeWidth="1.500" />
          <rect x="2" y="39" width="50" height="2.500" fill="#20204e" />
        </svg>
        <div className="relative ml-[11px] h-[54px] w-[62px]">
          <svg viewBox="0 0 62 52" className="h-[52px] w-[60px]">
            <rect width="60" height="50" fill="#10181b" />
            <rect width="60" height="3" fill="#3a3f42" />
            <path d="M4 8V49" stroke="#9a7a6a" strokeWidth="3" strokeDasharray="2.500 2.500" />
            <path d="M9 8V49" stroke="#4b5558" strokeWidth="4" strokeDasharray="1 4" />
            <rect x="26" y="3" width="14" height="13" fill="#eceff0" />
            <rect x="26" y="18" width="14" height="20" fill="#eceff0" />
            <path d="M28 8H38M28 24H38M28 30H38" stroke="#b9c0c2" strokeWidth="1" />
          </svg>
          <span className="absolute top-[34px] left-[39px] grid size-5 place-items-center rounded-[5px] bg-[#5bd14b]">
            <FaWhatsapp className="size-4 text-white" />
          </span>
        </div>
        <div className="relative mt-1 ml-[5px] h-[54px] w-[62px]">
          <svg viewBox="0 0 60 42" className="h-[42px] w-[60px]">
            <rect width="60" height="42" fill="#232427" />
            <rect width="60" height="3" fill="#3c3c3f" />
            <rect y="3" width="8" height="39" fill="#3b3b3e" />
            <path d="M2 2H5" stroke="#d98a2b" strokeWidth="2" />
            <path d="M3 8V36" stroke="#666" strokeWidth="3" strokeDasharray="1 2" />
          </svg>
          <Finder className="absolute top-[30px] left-[39px] size-5" />
        </div>
        <svg viewBox="0 0 48 62" className="-mt-1 ml-[13px] h-[62px] w-12">
          <defs>
            <linearGradient id="bin" x1="0" x2="1">
              <stop offset="0" stopColor="#6d7275" />
              <stop offset="0.45" stopColor="#a2a6a8" />
              <stop offset="1" stopColor="#5b6063" />
            </linearGradient>
          </defs>
          <path d="M5 12L9 4L16 7L21 1L28 5L35 2L40 8L43 12Q24 18 5 12Z" fill="#e9e9e9" />
          <path d="M1 8Q24 20 47 8L40 56Q38 61 24 61T8 56Z" fill="url(#bin)" opacity="0.9" />
          <path d="M7 11L14 4L20 9L28 3L34 9L41 7L39 13Q24 17 7 11Z" fill="#efefef" />
          <path d="M14 8L20 13L16 14ZM30 6L36 12L28 14Z" fill="#39414f" />
          <path d="M20 9L26 8L24 15Z" fill="#55b2c8" />
          <path d="M30 8L33 11" stroke="#d56b3b" strokeWidth="2" />
        </svg>
      </div>
    </div>
  );
}

export default function App() {
  return (
    <div className="flex h-[1964px] w-[3024px] flex-col overflow-hidden bg-[radial-gradient(ellipse_1100px_200px_at_1900px_1964px,#101a52_0%,#071029_55%,#03060f_100%)] font-[Inter,sans-serif]">
      <MenuBar />
      <div className="flex h-[1790px] shrink-0 flex-col">
        <div className="h-[226px] shrink-0 overflow-hidden rounded-t-[20px] border-2 border-b-2 border-[#55555b] border-t-[#6a696f] border-b-black bg-[#2b2a33]">
          <TabStrip />
          <AddressRow />
          <BookmarksBar />
        </div>
        <ShopPage />
      </div>
      <Dock />
    </div>
  );
}
